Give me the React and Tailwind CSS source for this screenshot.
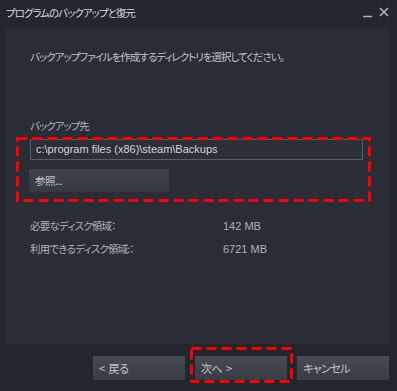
const JP = "font-['Noto_Sans_CJK_JP','Liberation_Sans',sans-serif] [font-feature-settings:'palt']"

function DashBox({ className }) {
    return (
        <svg className={'absolute pointer-events-none ' + className} width="100%" height="100%">
            <rect x="1.5" y="1.5" width="calc(100% - 3px)" height="calc(100% - 3px)" fill="none" stroke="#ff0000" strokeWidth="3" strokeDasharray="10 5" />
        </svg>
    )
}

function Btn({ children, className = '' }) {
    return (
        <button className={'h-[24px] w-[92px] flex items-center px-[6px] text-[11px] tracking-[-0.6px] text-[#c3c7cc] bg-gradient-to-b from-[#464b54] to-[#383c44] ' + className}>
            {children}
        </button>
    )
}

export default function App() {
    return (
        <div className={'w-[397px] h-[391px] bg-[#23262c] flex flex-col ' + JP}>
            <div className="h-[28px] flex items-center justify-between pl-[6px] pr-[8px]">
                <span className="text-[10.5px] tracking-[-1px] text-[#d6d8db] leading-none -mt-[2px]">プログラムのバックアップと復元</span>
                <div className="flex items-center gap-[7px] -mt-[4px]">
                    <svg width="9" height="12" viewBox="0 0 9 12">
                        <path d="M0 10.5 H9" stroke="#b0b4b9" strokeWidth="1.5" />
                    </svg>
                    <svg width="10" height="10" viewBox="0 0 10 10">
                        <path d="M1 1 L9 9 M9 1 L1 9" stroke="#b0b4b9" strokeWidth="1.6" />
                    </svg>
                </div>
            </div>

            <div className="ml-[5px] w-[384px] h-[316px] bg-[#2a2d35] flex flex-col pl-[25px] pr-[26px]">
                <p className="mt-[21px] text-[10.5px] tracking-[-1px] leading-[16px] text-[#c0c4c9]">
                    バックアップファイルを作成するディレクトリを選択してください。
                </p>

                <p className="mt-[53px] text-[10.5px] tracking-[-1px] leading-[16px] text-[#b4b8bd]">バックアップ先</p>

                <div className="relative mt-[5px]">
                    <DashBox className="-left-[14px] -top-[2px] w-[355px] h-[65px]" />
                    <div className="h-[21px] w-[333px] border border-[#5a5f67] bg-[#2b2f37] flex items-center px-[5px] font-['Liberation_Sans',sans-serif] text-[11px] text-[#d3d6da]">
                        c:\program files (x86)\steam\Backups
                    </div>
                    <button className="mt-[9px] -ml-[1px] h-[23px] w-[140px] flex items-center px-[6px] text-[10.5px] tracking-[-0.5px] text-[#c3c7cc] bg-gradient-to-b from-[#3e424a] to-[#353940]">
                        参照...
                    </button>
                </div>

                <div className="mt-[26px] flex flex-col gap-[7px] text-[10.5px] tracking-[-0.8px] leading-[16px] text-[#aeb2b8]">
                    <div className="flex">
                        <span className="w-[193px]">必要なディスク領域：</span>
                        <span className="font-['Liberation_Sans',sans-serif] text-[11px] tracking-normal">142 MB</span>
                    </div>
                    <div className="flex">
                        <span className="w-[193px]">利用できるディスク領域:：</span>
                        <span className="font-['Liberation_Sans',sans-serif] text-[11px] tracking-normal">6721 MB</span>
                    </div>
                </div>
            </div>

            <div className="mt-[12px] flex justify-end gap-[10px] pr-[8px]">
                <Btn><span className="mr-[4px]">&lt;</span>戻る</Btn>
                <div className="relative">
                    <DashBox className="-left-[5px] -top-[9px] w-[103px] h-[36px]" />
                    <Btn className="from-[#4a4f58] to-[#3b3f47]">次へ<span className="ml-[4px]">&gt;</span></Btn>
                </div>
                <Btn>キャンセル</Btn>
            </div>
        </div>
    )
}
